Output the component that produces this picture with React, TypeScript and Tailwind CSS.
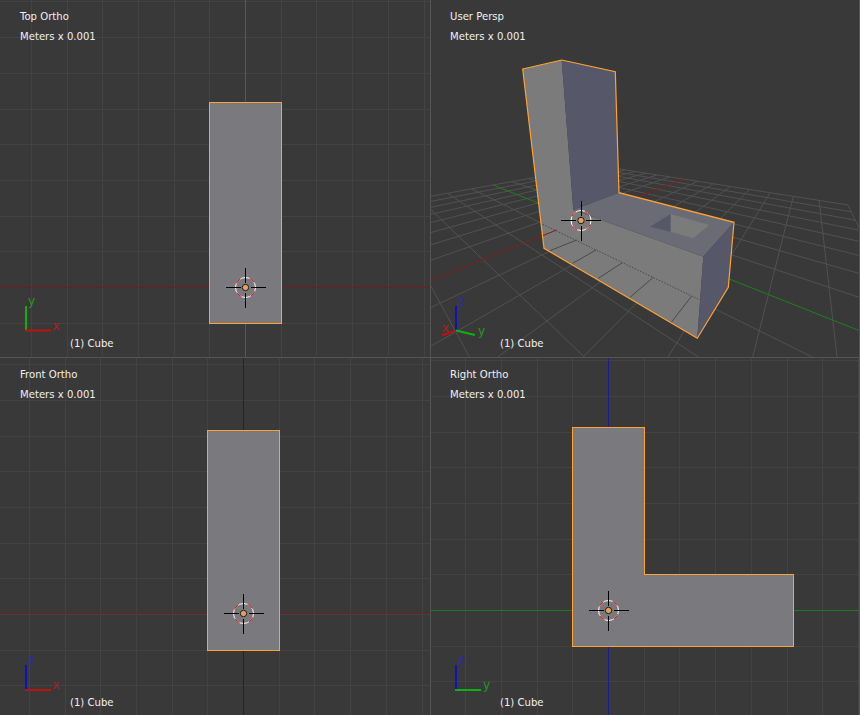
import React from "react";

const ORANGE = "#ffa233";
const FACE = "#7a797e";
const LIGHT = "#7b7b7b";
const DARK = "#565768";
const FLOOR = "#6b6b76";

function rng(a: number, b: number) {
  const r: number[] = [];
  for (let i = a; i <= b; i++) r.push(i);
  return r;
}

function OrthoGrid({ cx, cy, x0, y0 }: { cx: number; cy: number; x0: number; y0: number }) {
  const s = 35.7;
  const xs = rng(-12, 12).map((i) => Math.round(cx + i * s) + 0.5).filter((v) => v > x0 && v < x0 + 430);
  const ys = rng(-12, 12).map((i) => Math.round(cy + i * s) + 0.5).filter((v) => v > y0 && v < y0 + 357);
  return (
    <g stroke="#434343" strokeWidth={1} shapeRendering="crispEdges">
      {xs.map((x) => (
        <line key={"v" + x} x1={x} x2={x} y1={y0} y2={y0 + 357} />
      ))}
      {ys.map((y) => (
        <line key={"h" + y} x1={x0} x2={x0 + 430} y1={y} y2={y} />
      ))}
    </g>
  );
}

function Cursor({ x, y }: { x: number; y: number }) {
  return (
    <g>
      <circle cx={x} cy={y} r={10} fill="none" stroke="#ffffff" strokeWidth={1} />
      <circle cx={x} cy={y} r={10} fill="none" stroke="#e01010" strokeWidth={1} strokeDasharray="6 9.7" strokeDashoffset={-4} />
      <g stroke="#000000" strokeWidth={1} shapeRendering="crispEdges">
        <line x1={x - 20} x2={x - 5} y1={y} y2={y} />
        <line x1={x + 5} x2={x + 20} y1={y} y2={y} />
        <line x1={x} x2={x} y1={y - 20} y2={y - 5} />
        <line x1={x} x2={x} y1={y + 5} y2={y + 20} />
      </g>
      <circle cx={x} cy={y} r={3.2} fill="#e0a060" stroke="#1a1a1a" strokeWidth={1} />
    </g>
  );
}

function AxisLabel({ x, y, fill, t }: { x: number; y: number; fill: string; t: string }) {
  return (
    <text x={x} y={y} fill={fill} fontSize={12} fontFamily="'DejaVu Sans', sans-serif">
      {t}
    </text>
  );
}

function project(x: number, y: number) {
  const w = 1 - 0.7985 * x - 0.588 * y;
  return {
    w,
    x: (-647.4 * x - 201.9 * y + 581) / w,
    y: (-101.9 * x - 73.8 * y + 220) / w,
  };
}

function clippedLine(ax: number, ay: number, bx: number, by: number) {
  const eps = 0.04;
  const wa = 1 - 0.7985 * ax - 0.588 * ay;
  const wb = 1 - 0.7985 * bx - 0.588 * by;
  let tb = 1;
  if (wb < eps) tb = (wa - eps) / (wa - wb);
  const p = project(ax, ay);
  const q = project(ax + (bx - ax) * tb, ay + (by - ay) * tb);
  return { x1: p.x, y1: p.y, x2: q.x, y2: q.y };
}

function PerspGrid() {
  const ticks = rng(-8, 8).map((i) => i / 8);
  return (
    <g stroke="#515151" strokeWidth={1}>
      {ticks.filter((t) => t !== 0).map((t) => (
        <line key={"a" + t} {...clippedLine(-1, t, 1, t)} />
      ))}
      {ticks.filter((t) => t !== 0).map((t) => (
        <line key={"b" + t} {...clippedLine(t, -1, t, 1)} />
      ))}
      <line {...clippedLine(-1, 0, 1, 0)} stroke="#7e1f1f" />
      <line {...clippedLine(0, -1, 0, 1)} stroke="#1f7f1f" />
    </g>
  );
}

function PerspObject() {
  const sil =
    "522.7,69 561.7,60 615.3,71.7 619,192.7 734,222.3 728.3,287.3 697.3,338.3 544,248.3";
  return (
    <g>
      <polygon fill={LIGHT} points="522.7,69 561.7,60 573.3,210 703.3,256.7 697.3,338.3 544,248.3" />
      <polygon fill={DARK} points="561.7,60 615.3,71.7 619,192.7 573.3,210" />
      <polygon fill={FLOOR} points="573.3,210 619,192.7 734,222.3 703.3,256.7" />
      <polygon fill={DARK} points="734,222.3 728.3,287.3 697.3,338.3 703.3,256.7" />
      <polygon fill={DARK} points="650,226.7 670.7,214 670.7,231.7" />
      <polygon fill={LIGHT} points="670.7,214 709.3,225 693.3,238.3 670.7,231.7" />
      <line x1={540} y1={236.7} x2={556.7} y2={230} stroke="#7e1f1f" strokeWidth={1} />
      <g stroke="#4a4a4a" strokeWidth={1}>
        <line x1={550} y1={250.7} x2={576.7} y2={240} />
        <line x1={572.7} y1={263.3} x2={596} y2={250} />
        <line x1={598.3} y1={278.3} x2={622.3} y2={262.7} />
        <line x1={630} y1={297.3} x2={653.3} y2={277.3} />
        <line x1={671} y1={322.7} x2={691.7} y2={296} />
      </g>
      <line x1={540} y1={223} x2={700} y2={300} stroke="#4a4a4a" strokeWidth={1} strokeDasharray="1.5 1.5" />
      <polygon fill="none" stroke={ORANGE} strokeWidth={1.2} points={sil} />
    </g>
  );
}

function Pane({
  viewBox,
  title,
  art,
  className,
  textClass,
}: {
  viewBox: string;
  title: string;
  art: React.ReactNode;
  className: string;
  textClass: string;
}) {
  return (
    <section className={"relative h-full overflow-hidden bg-[#393939] " + className}>
      <svg className="absolute inset-0 w-full h-full" viewBox={viewBox} preserveAspectRatio="none">
        {art}
      </svg>
      <div
        className={
          "relative flex h-full flex-col justify-between pt-[7px] text-[10.1px] leading-5 text-[#f0f0f0] font-['DejaVu_Sans',sans-serif] " +
          textClass
        }
      >
        <div>
          <p>{title}</p>
          <p>Meters x 0.001</p>
        </div>
        <p className="pl-[50px]">(1) Cube</p>
      </div>
    </section>
  );
}

export default function App() {
  return (
    <main className="grid h-[715px] w-[860px] grid-cols-[430px_430px] grid-rows-[358px_357px] overflow-hidden bg-[#393939]">
      <Pane
        title="Top Ortho"
        viewBox="0 0 430 357"
        className="border-b border-[#555555]"
        textClass="pl-5 pb-[3px]"
        art={
          <>
            <OrthoGrid cx={245} cy={287} x0={0} y0={0} />
            <line x1={245.5} x2={245.5} y1={0} y2={357} stroke="#2a7a20" shapeRendering="crispEdges" />
            <line x1={0} x2={430} y1={287.5} y2={287.5} stroke="#6f1f1f" shapeRendering="crispEdges" />
            <rect x={209.5} y={102.5} width={72} height={221} fill={FACE} stroke={ORANGE} shapeRendering="crispEdges" />
            <Cursor x={245.5} y={287.5} />
            <line x1={26} x2={26} y1={306} y2={331} stroke="#10b010" strokeWidth={2} />
            <line x1={25} x2={51} y1={330.5} y2={330.5} stroke="#c01010" strokeWidth={2} />
            <AxisLabel x={28} y={305} fill="#229922" t="y" />
            <AxisLabel x={52.5} y={330} fill="#aa2222" t="x" />
          </>
        }
      />
      <Pane
        title="User Persp"
        viewBox="431 0 428 357"
        className="border-b border-l border-r border-[#555555]"
        textClass="pl-[19px] pb-[3px]"
        art={
          <>
            <PerspGrid />
            <PerspObject />
            <Cursor x={581} y={220.5} />
            <line x1={456} x2={456} y1={306} y2={331} stroke="#1010c0" strokeWidth={2} />
            <line x1={456} y1={330.5} x2={475} y2={335} stroke="#10b010" strokeWidth={2} />
            <line x1={456} y1={330.5} x2={442} y2={335.5} stroke="#c01010" strokeWidth={2} />
            <AxisLabel x={458} y={305} fill="#2a2ac0" t="z" />
            <AxisLabel x={478} y={335} fill="#229922" t="y" />
            <AxisLabel x={442} y={332} fill="#aa2222" t="x" />
          </>
        }
      />
      <Pane
        title="Front Ortho"
        viewBox="0 358 430 357"
        className=""
        textClass="pl-5 pb-[2px]"
        art={
          <>
            <OrthoGrid cx={243} cy={614} x0={0} y0={358} />
            <line x1={243.5} x2={243.5} y1={358} y2={715} stroke="#1c1c6e" shapeRendering="crispEdges" />
            <line x1={0} x2={430} y1={613.5} y2={613.5} stroke="#6f1f1f" shapeRendering="crispEdges" />
            <rect x={207.5} y={430.5} width={72} height={220} fill={FACE} stroke={ORANGE} shapeRendering="crispEdges" />
            <Cursor x={243.5} y={613.5} />
            <line x1={26} x2={26} y1={665} y2={690} stroke="#1010c0" strokeWidth={2} />
            <line x1={25} x2={51} y1={690} y2={690} stroke="#c01010" strokeWidth={2} />
            <AxisLabel x={28} y={664} fill="#2a2ac0" t="z" />
            <AxisLabel x={52.5} y={689} fill="#aa2222" t="x" />
          </>
        }
      />
      <Pane
        title="Right Ortho"
        viewBox="431 358 428 357"
        className="border-l border-r border-[#555555]"
        textClass="pl-[19px] pb-[2px]"
        art={
          <>
            <OrthoGrid cx={608} cy={610} x0={430} y0={358} />
            <line x1={608.5} x2={608.5} y1={358} y2={715} stroke="#1c1c96" shapeRendering="crispEdges" />
            <line x1={430} x2={860} y1={610.5} y2={610.5} stroke="#1c7a1c" shapeRendering="crispEdges" />
            <polygon
              points="572.5,427.5 644.5,427.5 644.5,574.5 793.5,574.5 793.5,646.5 572.5,646.5"
              fill={FACE}
              stroke={ORANGE}
              shapeRendering="crispEdges"
            />
            <Cursor x={608.5} y={610.5} />
            <line x1={456} x2={456} y1={665} y2={690} stroke="#1010c0" strokeWidth={2} />
            <line x1={455} x2={481} y1={690} y2={690} stroke="#10b010" strokeWidth={2} />
            <AxisLabel x={458} y={664} fill="#2a2ac0" t="z" />
            <AxisLabel x={483} y={689} fill="#229922" t="y" />
          </>
        }
      />
    </main>
  );
}
